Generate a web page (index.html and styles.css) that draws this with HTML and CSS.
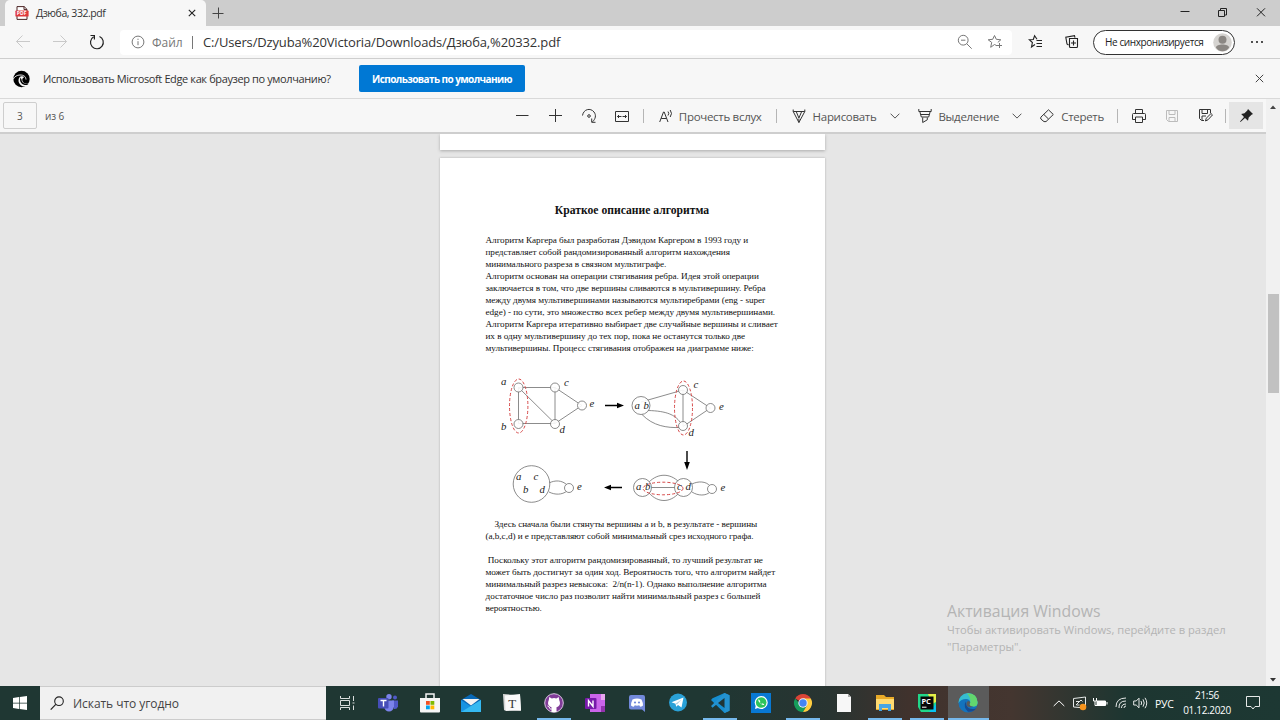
FILE: index.html
```html
<!DOCTYPE html>
<html lang="ru">
<head>
<meta charset="utf-8">
<title>Дзюба, 332.pdf</title>
<link rel="stylesheet" href="styles.css">
</head>
<body>
<div class="screen">
<header class="tabs">
  <div class="tab">
    <svg class="pdf-icon" width="14" height="14" viewBox="0 0 14 14"><path d="M2 .6h7.2l2.8 2.8v10H2z" fill="#fff" stroke="#4d2525"/><path d="M9 .6v3h3" fill="none" stroke="#4d2525"/><rect x=".4" y="4.600" width="13.200" height="6" rx=".7" fill="#e0383c"/><text x="1.800" y="9.300" class="pdf-word">PDF</text></svg>
    <span class="tab-title">Дзюба, 332.pdf</span>
    <svg class="tab-close" width="8" height="8" viewBox="0 0 8 8"><path d="M.8.800l6.400 6.400M7.200.800L.8 7.200" stroke="#222" stroke-width="1.100"/></svg>
  </div>
  <svg class="new-tab" width="12" height="12" viewBox="0 0 12 12"><path d="M6.500 .5v11M.5 6.500h11" stroke="#444"/></svg>
  <div class="window-buttons">
    <svg width="38" height="26" viewBox="0 0 38 26"><path d="M14.500 11.500h9" stroke="#222"/></svg>
    <svg width="38" height="26" viewBox="0 0 38 26"><path d="M14.500 10.500h6v6h-6zM16.500 10V8.500h6V15H21" fill="none" stroke="#222"/></svg>
    <svg width="38" height="26" viewBox="0 0 38 26"><path d="M15 8.300l8 8M23 8.300l-8 8" stroke="#222"/></svg>
  </div>
</header>

<nav class="address-row">
  <svg class="nav-icon" width="37" height="32" viewBox="0 0 37 32"><path d="M12.500 15.500H26M18.500 9.500l-6 6 6 6" fill="none" stroke="#c9c9c9"/></svg>
  <svg class="nav-icon" width="37" height="32" viewBox="0 0 37 32"><path d="M12 15.500h13.500M19.500 9.500l6 6-6 6" fill="none" stroke="#c9c9c9"/></svg>
  <svg class="nav-icon" width="37" height="32" viewBox="0 0 37 32"><path d="M21.500 10.500A6.400 6.400 0 1 1 15.700 10.800" fill="none" stroke="#222" stroke-width="1.200"/><path d="M12.500 9.500h3.900v4" fill="none" stroke="#222" stroke-width="1.200"/></svg>
  <div class="address">
    <svg width="14" height="14" viewBox="0 0 14 14"><circle cx="7" cy="7" r="5.900" fill="none" stroke="#777"/><path d="M7 6.200v4M7 3.700v1.200" stroke="#777"/></svg>
    <span class="scheme">Файл</span>
    <span class="address-bar"></span>
    <span class="url">C:/Users/Dzyuba%20Victoria/Downloads/Дзюба,%20332.pdf</span>
    <svg class="zoom-icon" width="16" height="16" viewBox="0 0 16 16"><circle cx="6.200" cy="6.200" r="4.900" fill="none" stroke="#777"/><path d="M4 6.200h4.400M9.700 9.700l5 5" stroke="#777"/></svg>
    <svg class="star-icon" width="16" height="16" viewBox="0 0 16 16"><path d="M10 11.800L7.500 10.500 3.700 13.300l1-4.900L1.200 5.800l4.500-.5L7.500 1.500l1.800 3.800 4.500.5-3 2.600M12.500 9v5M10 11.500h5" fill="none" stroke="#777"/></svg>
  </div>
  <svg class="fav" width="16" height="16" viewBox="0 0 16 16"><path d="M9 5.300L6.600 1.800 5.300 5.500 1.300 5.700 4.400 8.500 3.500 13 7 10.500M8.500 6.500H14M8.500 9.500H14M8.500 12.500H14" fill="none" stroke="#222" stroke-width="1.100"/></svg>
  <svg class="collect" width="16" height="16" viewBox="0 0 16 16"><path d="M5.500 4.500h8v8a1 1 0 0 1-1 1h-6a1 1 0 0 1-1-1zM4.500 11L3 10 1.800 3.300 10.500 1.700l.5 2M9.500 6.500v5M7 9h5" fill="none" stroke="#222" stroke-width="1.100"/></svg>
  <div class="profile"><span class="profile-text">Не синхронизируется</span><svg width="19" height="19" viewBox="0 0 19 19"><circle cx="9.500" cy="9.500" r="9.300" fill="#d5d3d0"/><circle cx="9.500" cy="6.800" r="4" fill="#8b8783"/><path d="M3 14.500c0-4 13-4 13 0-1 2.200-3.500 3.800-6.500 3.800S4 16.700 3 14.500z" fill="#8b8783"/></svg></div>
  <svg class="dots" width="14" height="4" viewBox="0 0 14 4"><circle cx="2" cy="2" r=".9"/><circle cx="7" cy="2" r=".9"/><circle cx="12" cy="2" r=".9"/></svg>
</nav>

<section class="infobar">
  <svg width="17" height="18" viewBox="0 0 17 18"><circle cx="8.500" cy="9" r="8.200"/><path d="M0 9.500C1.500 6.500 4 5 7 5c3.500 0 5.500 1 6 4.500" fill="none" stroke="#f7f7f7" stroke-width=".9"/><path d="M8 6.300c-4 1.800-3 8 1.500 10 3.500.7 5.700-1 6.800-3-4 1.200-7.300-.8-7-3.800C9.300 8 11 8 11 7c-.5-1-1.800-1-3-.700z" fill="#f7f7f7"/><path d="M7.600 7.500c-1.600 3 .4 6.800 4 7.500 2 .2 3.500-.5 4-1.300-3.500.7-7-1-7-4z"/></svg>
  <span class="question">Использовать Microsoft Edge как браузер по умолчанию?</span>
  <button class="default-button"><span class="button-text">Использовать по умолчанию</span></button>
  <svg class="info-close" width="9" height="9" viewBox="0 0 9 9"><path d="M.8.800l7.400 7.400M8.200.800L.8 8.200" stroke="#444"/></svg>
</section>

<main class="viewer">
  <div class="pdf">
    <div class="toolbar">
      <span class="page-number">3</span>
      <span class="page-total">из 6</span>
      <div class="zoom-tools">
        <svg width="33" height="20" viewBox="0 0 33 20"><path d="M10 9.500h12.500" stroke="#333"/></svg>
        <svg width="33" height="20" viewBox="0 0 33 20"><path d="M10 9.500h13M16.500 3v13" stroke="#333"/></svg>
        <svg width="34" height="20" viewBox="0 0 34 20"><path d="M10.500 9.500C11.500 3 18.500 1.500 22 6c2.500 3.200 1.500 7-1.500 9.800M23.500 16.300h-3.800v-3.800" fill="none" stroke="#333"/><circle cx="17" cy="10" r="1.300" fill="none" stroke="#333"/></svg>
        <svg width="33" height="20" viewBox="0 0 33 20"><path d="M9.500 5.500h13v10h-13zM11.500 10.500h4M16.500 10.500h4M13 9l-1.500 1.500L13 12M19 9l1.500 1.500L19 12" fill="none" stroke="#333"/></svg>
      </div>
      <i class="sep sep-a"></i>
      <svg class="read-icon" width="15" height="16" viewBox="0 0 15 16"><path d="M.7 14L4.500 4h.7L9 14M2.200 10.500h5.200M9 3.500Q10.500 5.500 9 7.500M11.200 2Q13.800 5.500 11.200 9" fill="none" stroke="#333"/></svg>
      <span class="tool-text t-read">Прочесть вслух</span>
      <i class="sep sep-b"></i>
      <svg class="draw-icon" width="14" height="16" viewBox="0 0 14 16"><path d="M1.200 1.500v2l5.700 11 5.900-11v-2M1.200 3.500H12.800M4.200 3.500l2.700 6.500 2.800-6.500M6.900 10.500v4" fill="none" stroke="#333"/></svg>
      <span class="tool-text t-draw">Нарисовать</span>
      <svg class="chev chev-a" width="10" height="6" viewBox="0 0 10 6"><path d="M.6.700L5 5.100 9.400.7" fill="none" stroke="#555"/></svg>
      <svg class="mark-icon" width="14" height="16" viewBox="0 0 14 16"><path d="M.8 1v2.500H13.200V1M1.800 3.500l1.500 5.500H10.700L12.200 3.500M2.700 6.500h8.600M4.700 9.500v5l4.600-2.700V9.500" fill="none" stroke="#333"/></svg>
      <span class="tool-text t-mark">Выделение</span>
      <svg class="chev chev-b" width="10" height="6" viewBox="0 0 10 6"><path d="M.6.700L5 5.100 9.400.7" fill="none" stroke="#555"/></svg>
      <svg class="erase-icon" width="14" height="14" viewBox="0 0 14 14"><path d="M.8 8.200L8.500.8 13.300 5.500 6 12.600H4L.8 10zM3.900 5.500L8.500 10" fill="none" stroke="#333"/></svg>
      <span class="tool-text t-erase">Стереть</span>
      <i class="sep sep-c"></i>
      <svg class="print-icon" width="14" height="14" viewBox="0 0 14 14"><path d="M3.500 10.500h-3V5.500q0-1 1-1h11q1 0 1 1v5h-3M3.500 4.500v-4h7v4M3.500 8h7v5.500h-7z" fill="none" stroke="#333"/></svg>
      <svg class="save-icon" width="12" height="12" viewBox="0 0 12 12"><path d="M.5.500h11v11h-9l-2-2zM3 .500v4h6v-4M3 11V7.500h6V11" fill="none" stroke="#bcbcbc"/></svg>
      <svg class="saveas-icon" width="14" height="13" viewBox="0 0 14 13"><path d="M5 11.500H2.500l-2-2V.5h11V4M3 .500v4h5.500v-4M3 11V7h4M6.500 12l.7-2.700L12 4.500l1.500 1.400L9 10.800z" fill="none" stroke="#333"/></svg>
      <i class="sep sep-d"></i>
      <span class="pin"><svg width="15" height="15" viewBox="0 0 15 15"><path d="M9 1l5 5-1.500.7-2.800 2.800-.7 3.300L6 10 1.500 14 1 13.500 5 9 2.200 6l3.300-.7L8.300 2.500z" fill="#222"/></svg></span>
    </div>
    <div class="pages">
      <div class="page-end"></div>
      <article class="page">
        <h1>Краткое описание алгоритма</h1>
        <p class="copy">Алгоритм Каргера был разработан Дэвидом Каргером в 1993 году и<br>представляет собой рандомизированный алгоритм нахождения<br>минимального разреза в связном мультиграфе.<br>Алгоритм основан на операции стягивания ребра. Идея этой операции<br>заключается в том, что две вершины сливаются в мультивершину. Ребра<br>между двумя мультивершинами называются мультиребрами (eng - super<br>edge) - по сути, это множество всех ребер между двумя мультивершинами.<br>Алгоритм Каргера итеративно выбирает две случайные вершины и сливает<br>их в одну мультивершину до тех пор, пока не останутся только две<br>мультивершины. Процесс стягивания отображен на диаграмме ниже:</p>
        <svg class="graph" width="260" height="140" viewBox="480 370 260 140">
          <g class="edges">
            <path d="M518.500 387.500H555V423.500H518.500zM518.500 387.500L555 423.500M555 387.500L582 405.500 555 423.500"/>
            <path d="M641 402L683 390 710.500 408 683 426.500V390M648 410.500C667 411 675 415 680 422M642 414.500C653 426 667 428 680 427.500"/>
            <path d="M549 483C555 480 562 480 567 485M549 492C555 495 562 495 567 491"/>
            <path d="M649 482C658 473 670 473 679 482M650 487.500H676M649 493C658 503 670 503 679 493M692 484C698 481 706 481 710 486M692 492C698 496 706 496 710 492"/>
          </g>
          <g class="nodes"><circle cx="518.500" cy="387.500" r="4.500"/><circle cx="555" cy="387.500" r="4.500"/><circle cx="518.500" cy="424" r="4.500"/><circle cx="555" cy="424" r="4.500"/><circle cx="582" cy="405.500" r="4.500"/><circle cx="641" cy="405.500" r="9"/><circle cx="683" cy="390" r="4.500"/><circle cx="683" cy="426" r="4.500"/><circle cx="710.500" cy="408" r="4.500"/><circle cx="531.500" cy="484" r="18.300"/><circle cx="569" cy="488" r="4.500"/><circle cx="642.500" cy="487.500" r="9"/><circle cx="683.500" cy="487.500" r="9"/><circle cx="712" cy="489" r="4.500"/></g>
          <g class="contract"><ellipse cx="518.700" cy="406" rx="9.200" ry="27"/><ellipse cx="683.500" cy="408" rx="9" ry="27"/><ellipse cx="663" cy="488.500" rx="20" ry="6.300"/></g>
          <path class="shaft" d="M605 405.500h14M622 487.500h-14M687 451v14"/>
          <path d="M617 402.700l7 2.800-7 2.800zM611 484.700l-7 2.800 7 2.800zM684.200 462l2.800 8 2.800-8z"/>
          <g class="labels"><text x="501" y="385">a</text><text x="564" y="385.500">c</text><text x="589.500" y="407">e</text><text x="501" y="430">b</text><text x="559.500" y="432.500">d</text><text x="634.500" y="408.500">a</text><text x="643.500" y="408.500">b</text><text x="693.500" y="388">c</text><text x="719" y="409.500">e</text><text x="688.500" y="435.500">d</text><text x="516" y="480">a</text><text x="533.500" y="480">c</text><text x="523" y="492.500">b</text><text x="539.500" y="492.500">d</text><text x="577" y="489.500">e</text><text x="636" y="490">a</text><text x="645" y="490">b</text><text x="677" y="489.500">c</text><text x="685.500" y="490">d</text><text x="720.500" y="490.500">e</text></g>
        </svg>
        <p class="copy after-graph">&nbsp; &nbsp; Здесь сначала были стянуты вершины a и b, в результате - вершины<br>(a,b,c,d) и e представляют собой минимальный срез исходного графа.</p>
        <p class="copy last-copy">&nbsp;Поскольку этот алгоритм рандомизированный, то лучший результат не<br>может быть достигнут за один ход. Вероятность того, что алгоритм найдет<br>минимальный разрез невысока:&nbsp; 2/n(n-1). Однако выполнение алгоритма<br>достаточное число раз позволит найти минимальный разрез с большей<br>вероятностью.</p>
      </article>
    </div>
  </div>
  <div class="scrollbar">
    <svg width="6" height="4" viewBox="0 0 6 4"><path d="M0 4l3-3.500L6 4z" fill="#444"/></svg>
    <i class="thumb"></i>
    <svg width="6" height="4" viewBox="0 0 6 4"><path d="M0 0l3 3.500L6 0z" fill="#333"/></svg>
  </div>
  <aside class="activation"><div class="act-title">Активация Windows</div><div class="act-copy"><span>Чтобы активировать Windows, перейдите в раздел</span><br><span>"Параметры".</span></div></aside>
</main>

<footer class="taskbar">
  <div class="start"><svg width="14" height="14" viewBox="0 0 14 14"><path d="M0 2l6-1v5.700H0zM6.700 1L14 0v6.700H6.700zM0 7.400h6v5.700l-6-1zM6.700 7.400H14V14l-7.300-1z" fill="#fff"/></svg></div>
  <div class="search"><svg width="14" height="15" viewBox="0 0 14 15"><circle cx="9" cy="5.200" r="4.300" fill="none" stroke="#222" stroke-width="1.100"/><path d="M5.800 8.300L.7 13.700" stroke="#222" stroke-width="1.200"/></svg><span class="search-text">Искать что угодно</span></div>
  <div class="apps">
    <span class="app"><svg width="20" height="20" viewBox="0 0 20 20"><path d="M3.500 3v2.500h9V3M3.500 17v-2.500h9V17M3.500 7.500h9v5h-9zM16.500 3v5M16.500 12.500V17M15.500 10h2" fill="none" stroke="#d9dddc"/></svg></span>
    <span class="app"><svg width="20" height="20" viewBox="0 0 20 20"><circle cx="11" cy="3.700" r="2.700" fill="#7b83eb"/><circle cx="17" cy="4.500" r="2" fill="#5059c9"/><path d="M14 7.500h6v6q-1 3-4 2.500z" fill="#5059c9"/><path d="M6 7.500h10v6q-1 5-5 5t-5-5z" fill="#7b83eb"/><rect y="5" width="10.500" height="10.500" rx="1" fill="#464eb8"/><path d="M2.500 7.500h6M5.500 7.500v6" stroke="#fff" stroke-width="1.400"/></svg></span>
    <span class="app"><svg width="20" height="20" viewBox="0 0 20 20"><path d="M6 6V1h8v5" fill="none" stroke="#f5f5f5" stroke-width="1.500"/><path d="M0 5h20v13.500q0 1-1 1H1q-1 0-1-1z" fill="#f5f5f5"/><path d="M6 8h3.800v3.800H6z" fill="#f25022"/><path d="M10.500 8h3.800v3.800h-3.800z" fill="#7fba00"/><path d="M6 12.500h3.800v3.800H6z" fill="#00a4ef"/><path d="M10.500 12.500h3.800v3.800h-3.800z" fill="#ffb900"/></svg></span>
    <span class="app"><svg width="20" height="20" viewBox="0 0 20 20"><path d="M0 7l10-6 10 6v12H0z" fill="#0868b6"/><path d="M1.500 6h17L10 12.500z" fill="#f2f2f2"/><path d="M0 7l10 6.500L20 7v12H0z" fill="#1693e2"/><path d="M0 19L20 7v12z" fill="#35b9f1"/></svg></span>
    <span class="app"><svg width="20" height="20" viewBox="0 0 20 20"><path d="M1 1l17 1.500 1 15.500-17-.8z" fill="#d8d8d8"/><path d="M3 2.500L18 1l1 16-15.500 1z" fill="#fafafa"/><text x="6.300" y="14.500" class="typora">T</text></svg></span>
    <span class="app running"><svg width="20" height="20" viewBox="0 0 20 20"><circle cx="10" cy="10" r="9.300" fill="#803b98" stroke="#d9c5e2"/><path d="M5.300 4l2.500 1.400q2.200-.6 4.500 0L14.700 4l.5 3q2 4.500-1 6.500l-1.700.8V19h-5v-4.700l-1.700-.8q-3-2-1-6.500z" fill="#fff"/><path d="M3.500 13q1.500 0 2.200 2t2 1" fill="none" stroke="#fff"/></svg></span>
    <span class="app"><svg width="20" height="20" viewBox="0 0 20 20"><path d="M5 1h15v18H5z" fill="#ca64ea"/><path d="M16 1h4v6h-4z" fill="#e7a5ef"/><path d="M16 13h4v6h-4z" fill="#9233ad"/><rect y="5" width="11.500" height="11" rx="1" fill="#7719aa"/><path d="M3.500 13.500v-6l4.500 6v-6" fill="none" stroke="#fff" stroke-width="1.400"/></svg></span>
    <span class="app"><svg width="20" height="20" viewBox="0 0 20 20"><path d="M4 2h12q2 0 2 2v15l-3-2.500H4q-2 0-2-2V4q0-2 2-2z" fill="#7289da"/><path d="M5.500 6.500q4.500-2 9 0 1.500 3 1.500 6-1.500 1.500-3 1l-.8-1.200q-2.200.7-4.400 0L7 13.500q-1.500.5-3-1 0-3 1.500-6z" fill="#fff"/><circle cx="8" cy="9.500" r="1.100" fill="#7289da"/><circle cx="12" cy="9.500" r="1.100" fill="#7289da"/></svg></span>
    <span class="app"><svg width="20" height="20" viewBox="0 0 20 20"><circle cx="10" cy="9.500" r="9" fill="#2aa1d7"/><path d="M3.500 9.300L15.500 4.500 13.500 14.500 10 12 8.200 13.700 7.500 10.700z" fill="#fff"/><path d="M7.500 10.700l6-4.300-4.500 5z" fill="#a9cee1"/></svg></span>
    <span class="app running"><svg width="20" height="20" viewBox="0 0 20 20"><path d="M14.500 0l5 2.200v15.600l-5 2.200L1 7l1.500-1.700z" fill="#168ed0"/><path d="M14.500 5L2.500 14.700 1 13 14.500 0l5 2.200v15.600l-5 2.200z" fill="#2492cf"/><path d="M14.500 5v10L8 10z" fill="#203535"/></svg></span>
    <span class="app"><svg width="20" height="20" viewBox="0 0 20 20"><path d="M0 0h20v20H0z" fill="#0878d3"/><circle cx="10.200" cy="9.500" r="6.500" fill="#fff"/><path d="M4 16l1-4.500 3.500 3z" fill="#fff"/><circle cx="10.200" cy="9.500" r="5.300" fill="#2dc45b"/><path d="M7.800 6.300q-1.500 1.200 1.200 3.800 3 2.900 4.300 1.300l-1.600-1.200-1 .8q-1.500-.8-2-2l.7-.8z" fill="#fff"/></svg></span>
    <span class="app running"><svg width="20" height="20" viewBox="0 0 20 20"><path d="M10 10L2.200 5.500A9 9 0 0 1 17.800 5.500z" fill="#db4437"/><path d="M10 10h-4l-3.800-4.500A9 9 0 0 0 10 19l4-6.700z" fill="#169d5b"/><path d="M10 5.500h7.800A9 9 0 0 1 10 19l4-6.700z" fill="#ffcd40"/><circle cx="10" cy="10" r="4.700" fill="#f1f1f1"/><circle cx="10" cy="10" r="3.700" fill="#4285f4"/></svg></span>
    <span class="app"><svg width="20" height="20" viewBox="0 0 20 20"><path d="M3 1h11l3 3v15H3z" fill="#f7f7f7"/><path d="M14 1v3h3z" fill="#aaa"/></svg></span>
    <span class="app running"><svg width="20" height="20" viewBox="0 0 20 20"><path d="M1 2h8l2 2h8v13H1z" fill="#e9aa28"/><path d="M1 6h18v10H1z" fill="#ffda70"/><path d="M4 18v-7h12v7h-3v-3H7v3z" fill="#48a5e2"/></svg></span>
    <span class="app running"><svg width="20" height="20" viewBox="0 0 20 20"><path d="M1 1h10l8 3v15H4l-3-5z" fill="#21d789"/><path d="M11 1h8v8l-4 2z" fill="#e6ef48"/><path d="M12 19l7-8v8z" fill="#07c3f2"/><path d="M3.500 3.500h13v13h-13z" fill="#080808"/><text x="4.400" y="10.800" class="pycharm">PC</text><path d="M5 14.200h4.500" stroke="#fff"/></svg></span>
    <span class="app active"><svg width="20" height="20" viewBox="0 0 20 20"><circle cx="10" cy="10" r="9.500" fill="#1373bd"/><path d="M.5 10A9.500 9.500 0 0 1 19.500 9q.3 4.500-4 4.500-4 0-4-2.500l.8-1.500Q12 6 8 6 3 6 .5 10z" fill="#36bdd1"/><path d="M9 .6Q19 0 19.500 9q.3 4.500-4 4.500-4 0-4-2.500l.8-1.500Q13 5 9 .6z" fill="#62d66e"/><path d="M7.500 8.500q-2.500 6 2.500 10.200 5 .8 8-3.200-7 2-9.500-3z" fill="#174a91"/><path d="M10 8q2 0 2.300 1.500L11.500 11q0 2.500 4 2.700-6 1.500-7-2.200Q8 9 10 8z" fill="#5b5b5b"/></svg></span>
  </div>
  <div class="tray">
    <svg class="tray-up" width="12" height="7" viewBox="0 0 12 7"><path d="M.7 6L6 .9 11.300 6" fill="none" stroke="#fff"/></svg>
    <svg class="tray-pen" width="15" height="15" viewBox="0 0 15 15"><path d="M1.500 2.500L13.500 1v11l-12-1zM4 9l5-5 1.500 1.500M4 5.500h4M4.500 9h3" fill="none" stroke="#e4e8e7"/><circle cx="11" cy="11" r="3.300" fill="#f7941d"/></svg>
    <svg class="tray-battery" width="15" height="12" viewBox="0 0 15 12"><path d="M4 4h8.500v4.500H4z" fill="#fff" stroke="#fff"/><path d="M14 5v2.500M.5 1v3h3V1M2 4v4.500h2" fill="none" stroke="#fff"/></svg>
    <svg class="tray-wifi" width="12" height="12" viewBox="0 0 12 12"><path d="M1 10Q1 1 11 1M4 11Q3.500 4 11 4M6.500 11Q6.500 7 11 7M9 11q0-2 2-2" fill="none" stroke="#e6e9e8"/></svg>
    <svg class="tray-sound" width="15" height="12" viewBox="0 0 15 12"><path d="M.7 4h2.500L6 1.200v9.600L3.200 8H.7zM8 4q1.300 2 0 4M10 2.300q2.500 3.700 0 7.400M12 .8q3.500 5.200 0 10.400" fill="none" stroke="#e6e9e8"/></svg>
    <span class="language">РУС</span>
    <div class="clock"><span>21:56</span><span class="date">01.12.2020</span></div>
    <svg class="notifications" width="14" height="14" viewBox="0 0 14 14"><path d="M.5.500h13v10H9l-2 2.500-2-2.500H.5z" fill="none" stroke="#e6e9e8"/></svg>
  </div>
</footer>
</div>
</body>
</html>
```
FILE: styles.css
```css
* { box-sizing: border-box; }
body { margin: 0; font-family: "Open Sans", "Noto Sans", sans-serif; color: #333; }
svg { display: block; flex: none; }
span { white-space: nowrap; }
.screen { width: 1280px; height: 720px; display: flex; flex-direction: column; overflow: hidden; }
.tabs { height: 26px; flex: none; background: #cdcdcd; display: flex; align-items: center; }
.tab { width: 201px; height: 26px; margin-left: 5px; padding-left: 9px; display: flex; align-items: center; background: #f7f7f7; border-radius: 5px 5px 0 0; }
.pdf-icon { margin-left: 1px; }
.pdf-word { font: bold 5px "Open Sans", sans-serif; fill: #fff; }
.tab-title { font-size: 10.5px; margin-left: 7px; width: 152px; letter-spacing: -.45px; color: #333; }
.new-tab { margin-left: 6px; }
.window-buttons { display: flex; margin-left: auto; }
.address-row { height: 33px; flex: none; display: flex; align-items: center; padding-left: 4px; background: #f7f7f7; border-bottom: 1px solid #cecece; }
.address { width: 892px; height: 25px; margin-left: 5px; padding-left: 11px; background: #fff; border-radius: 4px; display: flex; align-items: center; }
.scheme { font-size: 12px; color: #777; margin-left: 7px; width: 40px; }
.address-bar { width: 1px; height: 13px; background: #777; }
.url { font-size: 13px; margin-left: 10px; width: 754px; letter-spacing: -.15px; }
.star-icon { margin-left: 14px; }
.fav { margin-left: 16px; }
.collect { margin-left: 20px; }
.profile { width: 142px; height: 25px; margin-left: 13px; border: 1px solid #333; border-radius: 13px; display: flex; align-items: center; background: #fff; padding-left: 11px; }
.profile-text { width: 108px; font-size: 10px; letter-spacing: -.4px; color: #222; }
.dots { margin-left: 15px; }
.infobar { height: 40px; flex: none; display: flex; align-items: center; background: #f7f7f7; padding-left: 13px; border-bottom: 1px solid #d9d9d9; }
.question { width: 315px; margin-left: 13px; font-size: 11px; letter-spacing: -.38px; }
.default-button { width: 166px; height: 27px; margin-left: 1px; border: 0; padding: 0; border-radius: 2px; background: #0078d4; color: #fff; font: bold 10px "Open Sans", sans-serif; }
.button-text { letter-spacing: -.58px; }
.info-close { margin-left: auto; margin-right: 16px; }
.viewer { height: 587px; flex: none; display: flex; position: relative; }
.pdf { width: 1266px; }
.toolbar { height: 35px; display: flex; align-items: center; padding: 0 3px; background: #f7f7f7; border-bottom: 2px solid #cecece; }
.page-number { width: 34px; height: 27px; border: 1px solid #cecece; border-radius: 2px; text-align: center; font-size: 10px; line-height: 27px; color: #555; }
.page-total { width: 26px; margin-left: 8px; padding-top: 1px; font-size: 10px; letter-spacing: -.1px; color: #555; }
.zoom-tools { margin-left: 435px; display: flex; }
.sep { flex: none; width: 1px; height: 14px; background: #b5b5b5; }
.sep-a { margin-left: 4px; }
.read-icon { margin-left: 15px; }
.tool-text { font-size: 11.5px; letter-spacing: -.3px; color: #555; padding-top: 2px; }
.t-read { width: 97px; margin-left: 5px; }
.draw-icon { margin-left: 15px; }
.t-draw { width: 78px; margin-left: 7px; }
.mark-icon { margin-left: 18px; }
.t-mark { width: 74px; margin-left: 6px; }
.erase-icon { margin-left: 18px; }
.t-erase { width: 56px; margin-left: 7px; }
.print-icon { margin-left: 14px; }
.save-icon { margin-left: 20px; }
.saveas-icon { margin-left: 21px; }
.sep-d { margin-left: 12px; }
.pin { width: 34px; height: 27px; margin-left: 3px; background: #e5e5e5; display: grid; place-items: center; }
.pages { height: 552px; padding-right: 2px; overflow: hidden; background: #e6e6e6; display: flex; flex-direction: column; align-items: center; }
.page-end { width: 385px; height: 16px; flex: none; background: #fff; box-shadow: 0 1px 3px #aaa; }
.page { width: 385px; height: 540px; flex: none; margin-top: 8px; padding: 46px; background: #fff; color: #111; box-shadow: 0 0 2px #aaa; font-family: "Liberation Serif", serif; }
.page h1 { margin: 0; font-size: 11.65px; line-height: 14px; text-align: center; white-space: nowrap; }
.copy { margin: 16px 0 0; font-size: 9.2px; letter-spacing: -.045px; line-height: 12px; white-space: nowrap; }
.graph { margin: 16px 0 0 -6px; }
.copy.after-graph { margin-top: 8px; }
.copy.last-copy { margin-top: 12px; }
.edges, .nodes, .contract { fill: none; stroke: #666; stroke-width: .75; }
.nodes { fill: #fff; }
.nodes circle { fill-opacity: .9; }
.contract { stroke: #d64848; stroke-width: 1; stroke-dasharray: 3 2; }
.shaft { stroke: #000; stroke-width: 1.4; fill: none; }
.labels { font: italic 10.8px "Liberation Serif", serif; fill: #222; }
.scrollbar { width: 14px; background: #f1f1f1; display: flex; flex-direction: column; align-items: center; padding: 6px 0 4px; }
.thumb { width: 11px; height: 99px; margin-top: 185px; margin-bottom: auto; background: #c1c1c1; }
.activation { position: absolute; left: 947px; top: 501px; color: #b4b4b4; }
.act-title { font-size: 15.8px; line-height: 22px; }
.act-copy { font-size: 11.2px; line-height: 16.5px; }
.taskbar { height: 34px; flex: none; display: flex; color: #fff; background: linear-gradient(90deg, #1f3733 0 55%, #293431 65%, #40322d 71%, #443630 79%, #1d3631 88%, #1d3833); }
.start { width: 40px; display: grid; place-items: center; }
.search { width: 286px; display: flex; align-items: center; background: #f1f1f1; padding-left: 10px; border-top: 1px solid #ccc; border-bottom: 1px solid #ccc; }
.search-text { margin-left: 9px; color: #444; font-size: 12px; letter-spacing: -.06px; }
.apps { width: 663px; display: flex; }
.app { width: 41.44px; padding-top: 2px; display: grid; place-items: center; border-bottom: 2px solid transparent; }
.running { background: linear-gradient(#76b9ed, #76b9ed) center bottom / 34px 2px no-repeat border-box; }
.active { background: #5b5b5b; border-bottom-color: #76b9ed; }
.typora { font: 13px "Liberation Serif", serif; fill: #333; }
.pycharm { font: bold 7.5px "Open Sans", sans-serif; fill: #fff; }
.tray { width: 291px; display: flex; align-items: center; padding-left: 64px; }
.tray-pen { margin-left: 7px; }
.tray-battery { margin-left: 6px; }
.tray-wifi { margin-left: 7px; }
.tray-sound { margin-left: 6px; }
.language { width: 28px; margin-left: 7px; padding-top: 1px; font-size: 10.5px; letter-spacing: -.3px; }
.clock { width: 48px; display: flex; flex-direction: column; align-items: center; font-size: 10px; line-height: 15px; letter-spacing: -.3px; }
.date { letter-spacing: -.35px; }
.notifications { margin-left: 15px; }
```
